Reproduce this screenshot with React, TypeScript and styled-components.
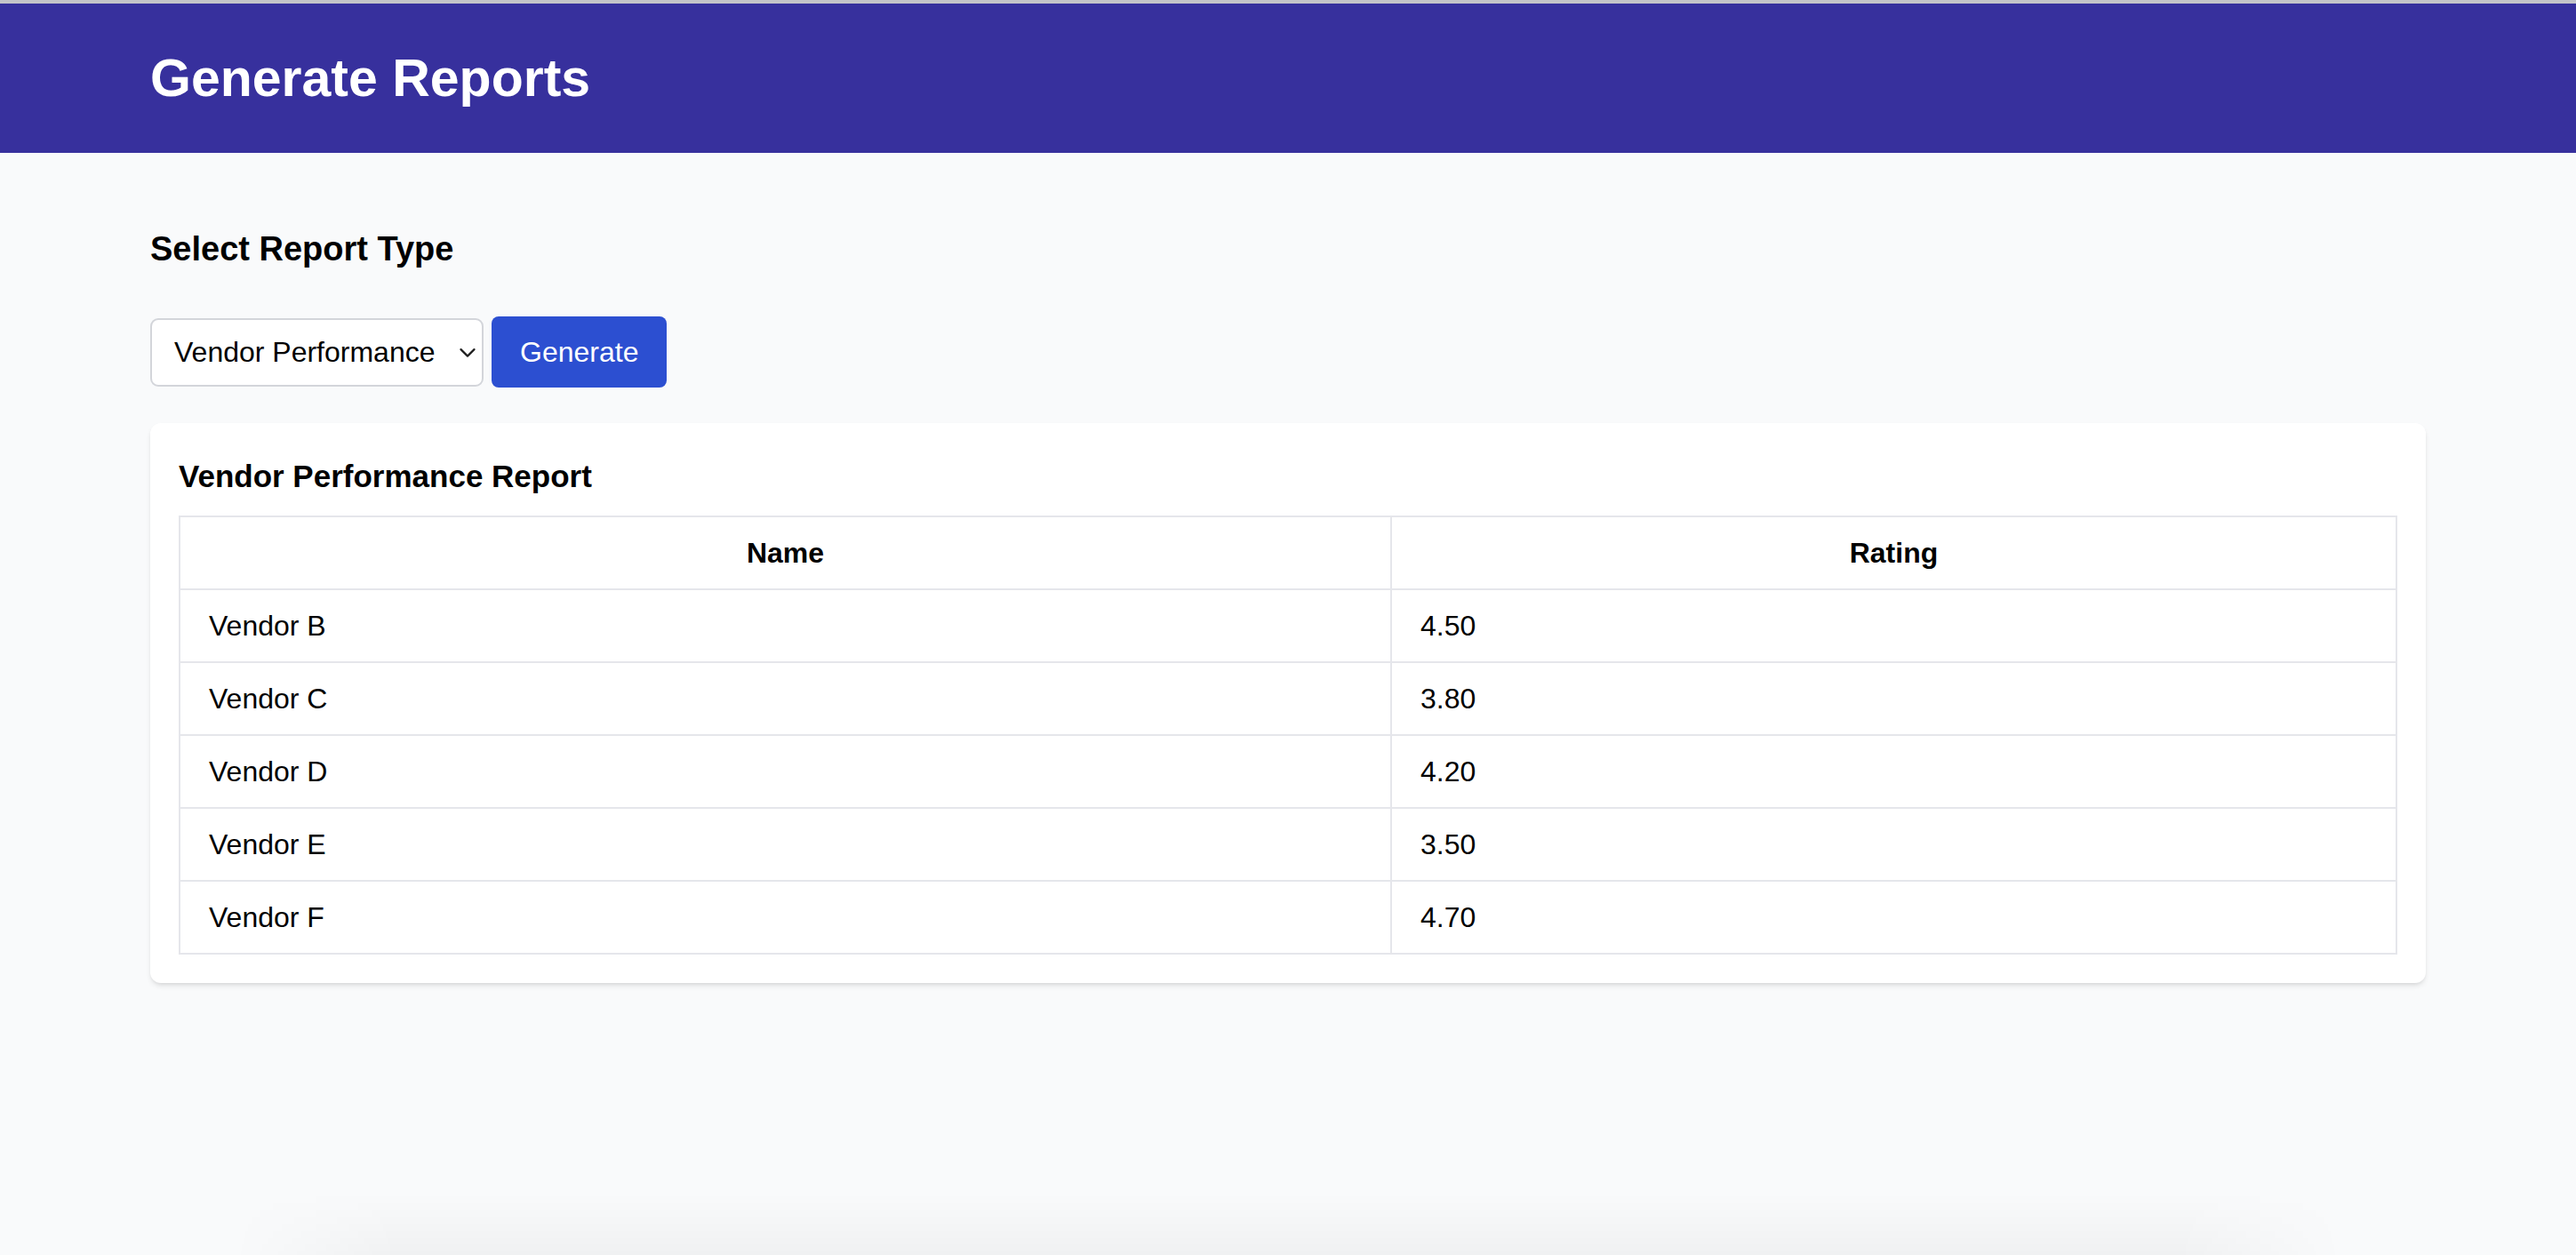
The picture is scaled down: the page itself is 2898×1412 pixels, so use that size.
import React from "react";
import styled, { createGlobalStyle } from "styled-components";

const GlobalStyle = createGlobalStyle`
  html, body {
    margin: 0;
    padding: 0;
    height: 100%;
  }
  body {
    background: #f9fafb;
    color: #000;
    font-family: "Liberation Sans", Arial, sans-serif;
  }
  * { box-sizing: border-box; }
`;

const Page = styled.div`
  min-height: 100vh;
  background: #f9fafb;
  display: flex;
  flex-direction: column;
`;

const Header = styled.header`
  background: #37309d;
  border-top: 4px solid #c4c4c9;
  padding: 48px 0 48px;
`;

const Container = styled.div`
  width: 2560px;
  margin: 0 auto;
`;

const Title = styled.h1`
  margin: 0;
  color: #fff;
  font-size: 59px;
  line-height: 72px;
  font-weight: 700;
`;

const Main = styled.main`
  padding: 80px 0;
`;

const SectionTitle = styled.h2`
  margin: 0 0 48px;
  font-size: 38px;
  line-height: 56px;
  font-weight: 700;
`;

const Controls = styled.div`
  display: flex;
  align-items: center;
  gap: 9px;
  margin-bottom: 40px;
`;

const SelectWrap = styled.div`
  position: relative;
  width: 375px;
  height: 77px;
`;

const Select = styled.select`
  appearance: none;
  -webkit-appearance: none;
  width: 100%;
  height: 100%;
  border: 2px solid #d3d5da;
  border-radius: 9px;
  background: #fff;
  padding: 0 48px 0 25px;
  font-family: "Liberation Sans", Arial, sans-serif;
  font-size: 32px;
  color: #000;
  outline: none;
`;

const Chevron = styled.svg`
  position: absolute;
  right: 9px;
  top: 50%;
  width: 18px;
  height: 11px;
  transform: translateY(-40%);
  pointer-events: none;
`;

const Button = styled.button`
  height: 80px;
  padding: 0 32px;
  border: none;
  border-radius: 8px;
  background: #2c4fd1;
  color: #fff;
  font-family: "Liberation Sans", Arial, sans-serif;
  font-size: 32px;
  line-height: 48px;
  cursor: pointer;
`;

const Card = styled.section`
  background: #fff;
  border-radius: 12px;
  padding: 32px;
  box-shadow: 0 4px 6px -1px rgba(0, 0, 0, 0.1), 0 2px 4px -2px rgba(0, 0, 0, 0.1);
`;

const CardTitle = styled.h3`
  margin: 0 0 16px;
  font-size: 35px;
  line-height: 56px;
  font-weight: 700;
`;

const Table = styled.table`
  width: 100%;
  border-collapse: collapse;
  font-size: 32px;
  line-height: 48px;
`;

const Th = styled.th<{ $w?: string }>`
  border: 2px solid #e5e6eb;
  padding: 16px 32px;
  font-weight: 700;
  text-align: center;
  width: ${(p) => p.$w ?? "auto"};
`;

const Td = styled.td`
  border: 2px solid #e5e6eb;
  padding: 16px 32px;
  text-align: left;
`;

const BottomShade = styled.div`
  position: fixed;
  left: 260px;
  right: 260px;
  bottom: 0;
  height: 70px;
  pointer-events: none;
  background: linear-gradient(to bottom, rgba(0, 0, 0, 0), rgba(0, 0, 0, 0.035));
  -webkit-mask-image: linear-gradient(to right, transparent, #000 8%, #000 92%, transparent);
  mask-image: linear-gradient(to right, transparent, #000 8%, #000 92%, transparent);
`;

const vendors = [
  { name: "Vendor B", rating: 4.5 },
  { name: "Vendor C", rating: 3.8 },
  { name: "Vendor D", rating: 4.2 },
  { name: "Vendor E", rating: 3.5 },
  { name: "Vendor F", rating: 4.7 },
];

export default function App() {
  return (
    <>
      <GlobalStyle />
      <Page>
        <Header>
          <Container>
            <Title>Generate Reports</Title>
          </Container>
        </Header>
        <Main>
          <Container>
            <SectionTitle>Select Report Type</SectionTitle>
            <Controls>
              <SelectWrap>
                <Select defaultValue="vendor">
                  <option value="vendor">Vendor Performance</option>
                  <option value="inventory">Inventory</option>
                  <option value="sales">Sales</option>
                </Select>
                <Chevron viewBox="0 0 18 11" fill="none">
                  <path d="M1.5 1.5 L9 9 L16.5 1.5" stroke="#1f1f1f" strokeWidth="2.2" strokeLinecap="round" strokeLinejoin="round" />
                </Chevron>
              </SelectWrap>
              <Button>Generate</Button>
            </Controls>
            <Card>
              <CardTitle>Vendor Performance Report</CardTitle>
              <Table>
                <thead>
                  <tr>
                    <Th $w="54.65%">Name</Th>
                    <Th>Rating</Th>
                  </tr>
                </thead>
                <tbody>
                  {vendors.map((v) => (
                    <tr key={v.name}>
                      <Td>{v.name}</Td>
                      <Td>{v.rating.toFixed(2)}</Td>
                    </tr>
                  ))}
                </tbody>
              </Table>
            </Card>
          </Container>
        </Main>
        <BottomShade />
      </Page>
    </>
  );
}
